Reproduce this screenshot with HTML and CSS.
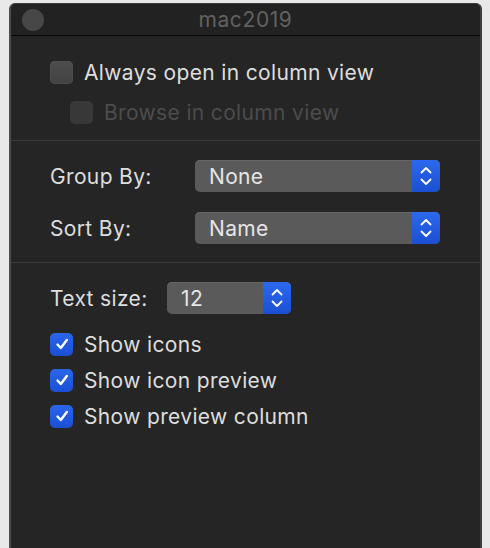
FILE: index.html
```html
<!DOCTYPE html>
<html>
<head>
<meta charset="utf-8">
<link rel="stylesheet" href="styles.css">
</head>
<body>
<div class="window">
  <div class="titlebar">
    <span class="close"></span>
    <span class="title">mac2019</span>
  </div>
  <div class="section s1">
    <label class="check-row">
      <span class="box"></span>
      <span class="text">Always open in column view</span>
    </label>
    <label class="check-row indent disabled">
      <span class="box"></span>
      <span class="text">Browse in column view</span>
    </label>
  </div>
  <div class="section s2">
    <div class="field-row">
      <span class="label">Group By:</span>
      <div class="popup wide">
        <span class="value">None</span>
        <span class="stepper"><svg width="12" height="22" viewBox="0 0 12 22"><path d="M1.5 7.5 L6 3 L10.5 7.5 M1.5 14.5 L6 19 L10.5 14.5" fill="none" stroke="#fff" stroke-width="1.8" stroke-linecap="round" stroke-linejoin="round"/></svg></span>
      </div>
    </div>
    <div class="field-row">
      <span class="label">Sort By:</span>
      <div class="popup wide">
        <span class="value">Name</span>
        <span class="stepper"><svg width="12" height="22" viewBox="0 0 12 22"><path d="M1.5 7.5 L6 3 L10.5 7.5 M1.5 14.5 L6 19 L10.5 14.5" fill="none" stroke="#fff" stroke-width="1.8" stroke-linecap="round" stroke-linejoin="round"/></svg></span>
      </div>
    </div>
  </div>
  <div class="section s3">
    <div class="field-row size-row">
      <span class="label">Text size:</span>
      <div class="popup narrow">
        <span class="value">12</span>
        <span class="stepper"><svg width="12" height="22" viewBox="0 0 12 22"><path d="M1.5 7.5 L6 3 L10.5 7.5 M1.5 14.5 L6 19 L10.5 14.5" fill="none" stroke="#fff" stroke-width="1.8" stroke-linecap="round" stroke-linejoin="round"/></svg></span>
      </div>
    </div>
    <div class="checks">
      <label class="check-row checked">
        <span class="box"><svg width="16" height="16" viewBox="0 0 16 16"><path d="M3.5 8.5 L6.8 12 L12.8 4" fill="none" stroke="#fff" stroke-width="2.4" stroke-linecap="round" stroke-linejoin="round"/></svg></span>
        <span class="text">Show icons</span>
      </label>
      <label class="check-row checked">
        <span class="box"><svg width="16" height="16" viewBox="0 0 16 16"><path d="M3.5 8.5 L6.8 12 L12.8 4" fill="none" stroke="#fff" stroke-width="2.4" stroke-linecap="round" stroke-linejoin="round"/></svg></span>
        <span class="text">Show icon preview</span>
      </label>
      <label class="check-row checked">
        <span class="box"><svg width="16" height="16" viewBox="0 0 16 16"><path d="M3.5 8.5 L6.8 12 L12.8 4" fill="none" stroke="#fff" stroke-width="2.4" stroke-linecap="round" stroke-linejoin="round"/></svg></span>
        <span class="text">Show preview column</span>
      </label>
    </div>
  </div>
</div>
</body>
</html>
```
FILE: styles.css
```css
html, body {
  margin: 0;
  padding: 0;
  height: 100%;
  overflow: hidden;
}
body {
  background: #e9e9e9;
  font-family: "Inter", "Liberation Sans", sans-serif;
  color: #dedede;
  padding-top: 3px;
  padding-left: 9px;
}
.window {
  width: 469px;
  height: 560px;
  background: #252525;
  border-left: 2px solid #4c4c4c;
  border-right: 2px solid #3e3e3e;
  border-top: 1px solid #3a3a3a;
  border-radius: 6px 6px 0 0;
  box-sizing: content-box;
}
.titlebar {
  height: 31px;
  background: #222222;
  border-bottom: 1px solid #080808;
  display: flex;
  align-items: center;
  justify-content: center;
  position: relative;
  border-radius: 5px 5px 0 0;
}
.close {
  position: absolute;
  left: 11px;
  top: 5px;
  width: 22px;
  height: 22px;
  border-radius: 50%;
  background: #474747;
}
.title {
  font-size: 21px;
  color: #616161;
  letter-spacing: 0.6px;
}
.section {
  padding-left: 39px;
}
.section + .section {
  border-top: 1px solid #3a3a3a;
}
.s1 {
  padding-top: 24px;
  padding-bottom: 16px;
  display: flex;
  flex-direction: column;
  gap: 16px;
}
.s2 {
  padding-top: 19px;
  padding-bottom: 18px;
  display: flex;
  flex-direction: column;
  gap: 20px;
}
.s3 {
  padding-top: 19px;
}
.check-row {
  display: flex;
  align-items: center;
  height: 24px;
  gap: 11px;
}
.check-row.indent {
  padding-left: 20px;
}
.box {
  width: 23px;
  height: 23px;
  border-radius: 5px;
  background: linear-gradient(#4d4d4d, #424242);
  box-shadow: inset 0 0 0 0.5px #555;
  display: flex;
  align-items: center;
  justify-content: center;
  flex: none;
}
.text, .label, .value {
  font-size: 21px;
  letter-spacing: 0.35px;
}
.disabled .box {
  background: #383838;
  box-shadow: none;
}
.disabled .text {
  color: #4c4c4c;
}
.checked .box {
  background: linear-gradient(#2a66ec, #1a4fd3);
  box-shadow: none;
}
.field-row {
  display: flex;
  align-items: center;
  height: 32px;
}
.label {
  width: 145px;
  flex: none;
}
.size-row .label {
  width: 117px;
}
.popup {
  height: 32px;
  border-radius: 5px;
  background: #5a5a5a;
  box-shadow: inset 0 1px 0 #666;
  display: flex;
  align-items: center;
  overflow: hidden;
}
.popup.wide {
  width: 245px;
}
.popup.narrow {
  width: 124px;
}
.value {
  flex: 1;
  padding-left: 14px;
  color: #e6e6e6;
}
.stepper {
  width: 28px;
  height: 32px;
  background: linear-gradient(#2c69ee, #1b4fd2);
  display: flex;
  align-items: center;
  justify-content: center;
}
.checks {
  margin-top: 18px;
  display: flex;
  flex-direction: column;
  gap: 12px;
}
```
